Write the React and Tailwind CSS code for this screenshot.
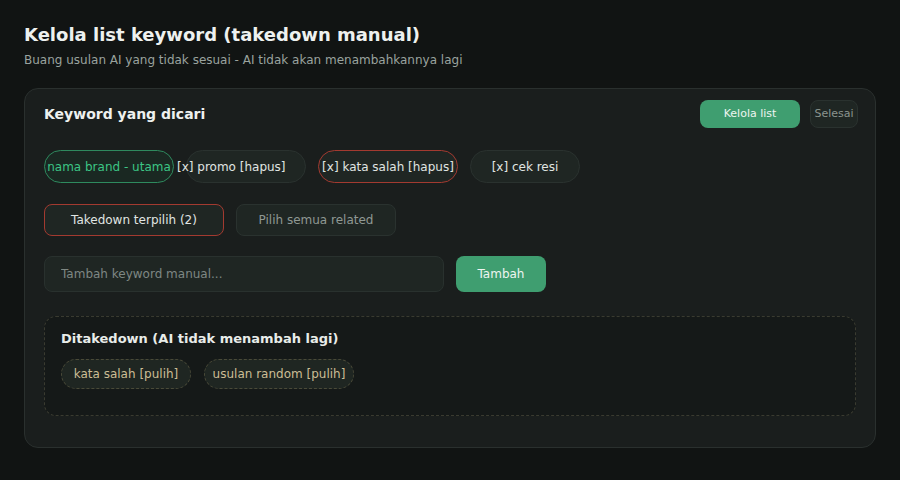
import React, { useState } from "react";

const font = { fontFamily: '"DejaVu Sans", "Liberation Sans", sans-serif' };

const App = () => {
  const [keyword, setKeyword] = useState("");

  return (
    <div className="min-h-screen w-full bg-[#111413] px-6 pt-6 text-[#e8ece9]" style={font}>
      <h1 className="text-[18px] leading-[22px] font-bold text-[#eef1ef]">
        Kelola list keyword (takedown manual)
      </h1>
      <p className="mt-[6px] text-[12px] leading-[16px] text-[#9aa39f]">
        Buang usulan AI yang tidak sesuai - AI tidak akan menambahkannya lagi
      </p>

      <div className="mt-[20px] h-[360px] rounded-[14px] border border-[#2a302e] bg-[#1a1e1d] pl-[19px] pr-[17px] pt-[11px]">
        <div className="flex h-[28px] items-center justify-between">
          <h2 className="text-[14px] font-bold text-[#eef1ef]">Keyword yang dicari</h2>
          <div className="flex items-center gap-[10px]">
            <button className="h-[28px] w-[100px] rounded-lg bg-[#3f9e70] text-[11px] text-[#eef5f1]">
              Kelola list
            </button>
            <button className="h-[28px] w-[48px] rounded-lg border border-[#2a322f] bg-[#1f2623] text-[11px] text-[#8b948f]">
              Selesai
            </button>
          </div>
        </div>

        <div className="mt-[22px] flex items-center gap-3">
          <button className="flex h-[33px] w-[130px] items-center justify-center whitespace-nowrap rounded-full border border-[#2e8a5e] bg-[#1a2822] text-[12px] text-[#3cc585]">
            nama brand - utama
          </button>
          <button className="flex h-[33px] w-[120px] items-center justify-start whitespace-nowrap rounded-full border border-[#2a322f] bg-[#1f2623] text-[12px] text-[#e0e5e2]">
            <span className="-ml-[10px]">[x] promo [hapus]</span>
          </button>
          <button className="flex h-[33px] w-[140px] items-center justify-center whitespace-nowrap rounded-full border border-[#a33a30] bg-[#1f2623] text-[12px] text-[#e0e5e2]">
            [x] kata salah [hapus]
          </button>
          <button className="flex h-[33px] w-[110px] items-center justify-center whitespace-nowrap rounded-full border border-[#2a322f] bg-[#1f2623] text-[12px] text-[#e0e5e2]">
            [x] cek resi
          </button>
        </div>

        <div className="mt-[21px] flex items-center gap-3">
          <button className="h-[32px] w-[180px] rounded-lg border border-[#a33a30] bg-[#1f2623] text-[12px] text-[#e0e5e2]">
            Takedown terpilih (2)
          </button>
          <button className="h-[32px] w-[160px] rounded-lg border border-[#2a322f] bg-[#1f2623] text-[12px] text-[#8f9893]">
            Pilih semua related
          </button>
        </div>

        <div className="mt-[20px] flex items-center gap-3">
          <input
            value={keyword}
            onChange={(e) => setKeyword(e.target.value)}
            placeholder="Tambah keyword manual..."
            className="h-[36px] w-[400px] rounded-lg border border-[#29312e] bg-[#1f2623] px-4 text-[12px] text-[#e0e5e2] outline-none placeholder:text-[#7e8783]"
            style={font}
          />
          <button className="h-[36px] w-[90px] rounded-lg bg-[#3f9e70] text-[12px] text-[#eef5f1]">
            Tambah
          </button>
        </div>

        <div className="mt-[24px] mr-[2px] h-[100px] rounded-xl border border-dashed border-[#3a3b30] bg-[#151918] px-4 pt-[13px]">
          <h3 className="text-[13px] leading-[18px] font-bold text-[#e8ece9]">
            Ditakedown (AI tidak menambah lagi)
          </h3>
          <div className="mt-[11px] flex items-center gap-[13px]">
            <button className="flex h-[30px] w-[130px] items-center justify-center whitespace-nowrap rounded-full border border-dashed border-[#4a4a38] bg-[#1f2622] text-[12px] text-[#cbbd95]">
              kata salah [pulih]
            </button>
            <button className="flex h-[30px] w-[150px] items-center justify-center whitespace-nowrap rounded-full border border-dashed border-[#4a4a38] bg-[#1f2622] text-[12px] text-[#cbbd95]">
              usulan random [pulih]
            </button>
          </div>
        </div>
      </div>
    </div>
  );
};

export default App;
